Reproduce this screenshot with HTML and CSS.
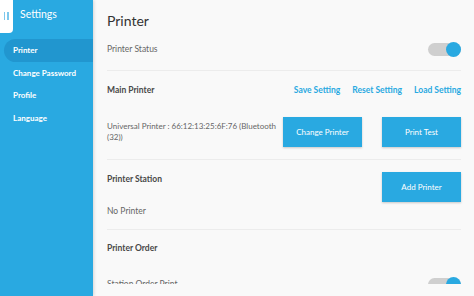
FILE: index.html
```html
<!DOCTYPE html>
<html lang="en">
<head>
  <meta charset="UTF-8" />
  <meta name="viewport" content="width=device-width, initial-scale=1.0"/>
  <title>Settings</title>
  <link rel="stylesheet" href="styles.css">
</head>
<body>
  <!-- SIDEBAR -->
  <div class="sidebar">
    <div class="sidebar-head">
      <div class="tab"><span class="bar"></span><span class="bar"></span></div>
      <span class="sidebar-title">Settings</span>
    </div>
    <div class="menu">
      <div class="menu-item active">Printer</div>
      <div class="menu-item">Change Password</div>
      <div class="menu-item">Profile</div>
      <div class="menu-item">Language</div>
    </div>
  </div>

  <!-- CONTENUTO -->
  <div class="main">
    <h1 class="title">Printer</h1>

    <div class="section status">
      <span class="label">Printer Status</span>
      <div class="toggle on"><div class="knob"></div></div>
    </div>

    <div class="section">
      <div class="head-row">
        <span class="heading">Main Printer</span>
        <div class="links">
          <a class="link">Save Setting</a>
          <a class="link">Reset Setting</a>
          <a class="link">Load Setting</a>
        </div>
      </div>
      <div class="info-row">
        <span class="label info">Universal Printer : 66:12:13:25:6F:76 (Bluetooth (32))</span>
        <div class="buttons">
          <button class="btn">Change Printer</button>
          <button class="btn">Print Test</button>
        </div>
      </div>
    </div>

    <div class="section station">
      <div class="station-text">
        <span class="heading">Printer Station</span>
        <span class="label no-printer">No Printer</span>
      </div>
      <button class="btn">Add Printer</button>
    </div>

    <div class="section last">
      <span class="heading">Printer Order</span>
      <div class="order-row">
        <span class="label">Station Order Print</span>
        <div class="toggle on"><div class="knob"></div></div>
      </div>
    </div>
  </div>
</body>
</html>
```

FILE: styles.css
```css
body {
  margin: 0;
  height: 296px;
  overflow: hidden;
  display: flex;
  align-items: flex-start;
  background: #f9f9f9;
  font-family: "Lato", "Open Sans", sans-serif;
  color: #444;
}

/* SIDEBAR */
.sidebar {
  width: 93px;
  height: 296px;
  flex-shrink: 0;
  background: #29a9e1;
  box-shadow: 1px 0 3px rgba(0, 0, 0, 0.15);
  z-index: 1;
}

.sidebar-head {
  display: flex;
  align-items: flex-start;
  height: 39px;
}

.tab {
  width: 13px;
  height: 33px;
  background: #fff;
  border-bottom-right-radius: 4px;
  display: flex;
  justify-content: center;
  gap: 2px;
  padding: 12px 1px 0 0;
  box-sizing: border-box;
}

.bar {
  width: 1.5px;
  height: 8px;
  background: #7ec8ec;
}

.sidebar-title {
  color: #fff;
  font-size: 10.5px;
  margin: 8px 0 0 7px;
}

.menu-item {
  color: #fff;
  font-size: 8px;
  font-weight: bold;
  height: 22.5px;
  line-height: 22.5px;
  padding-left: 9px;
  margin-left: 4px;
}

.menu-item.active {
  background: #2196cf;
  border-radius: 12px 0 0 12px;
}

/* CONTENUTO */
.main {
  flex: 1;
  min-width: 0;
  height: 284px;
  box-sizing: border-box;
  overflow: hidden;
  padding: 10px 13px 0 14px;
}

.title {
  margin: 0;
  font-size: 14px;
  font-weight: normal;
  line-height: 22px;
  color: #333;
}

.section {
  border-bottom: 1px solid #ececec;
}

.section.last {
  border-bottom: none;
}

.label {
  font-size: 8.5px;
  color: #666;
  line-height: 18px;
}

.heading {
  font-size: 8.5px;
  font-weight: bold;
  color: #484848;
  line-height: 18px;
}

.status {
  display: flex;
  justify-content: space-between;
  align-items: center;
  padding: 8px 0 12px;
}

.toggle {
  width: 33px;
  height: 13px;
  border-radius: 7px;
  background: #cfcfcf;
  position: relative;
}

.knob {
  position: absolute;
  right: 0;
  top: -1px;
  width: 15px;
  height: 15px;
  border-radius: 50%;
  background: #29a9e1;
}

.head-row {
  display: flex;
  justify-content: space-between;
  padding-top: 10px;
}

.links {
  display: flex;
  gap: 12px;
}

.link {
  font-size: 8.5px;
  font-weight: bold;
  color: #29a9e1;
  line-height: 18px;
}

.info-row {
  display: flex;
  align-items: center;
  gap: 6px;
  margin-top: 18px;
  padding-bottom: 12px;
}

.info {
  flex: 1;
  min-width: 0;
  font-size: 8px;
  line-height: 11px;
}

.buttons {
  display: flex;
  gap: 20px;
}

.btn {
  width: 79px;
  height: 30px;
  border: none;
  background: #29a9e1;
  color: #fff;
  font-family: inherit;
  font-size: 8px;
  box-shadow: 0 1px 2px rgba(0, 0, 0, 0.2);
  padding: 0;
}

.station {
  display: flex;
  justify-content: space-between;
  align-items: flex-start;
  padding: 10px 0 9px;
}

.station .btn {
  margin-top: 2px;
}

.station-text {
  display: flex;
  flex-direction: column;
}

.no-printer {
  margin-top: 14px;
}

.last {
  padding-top: 9px;
  display: flex;
  flex-direction: column;
}

.order-row {
  display: flex;
  justify-content: space-between;
  align-items: center;
  margin-top: 18px;
}
```
